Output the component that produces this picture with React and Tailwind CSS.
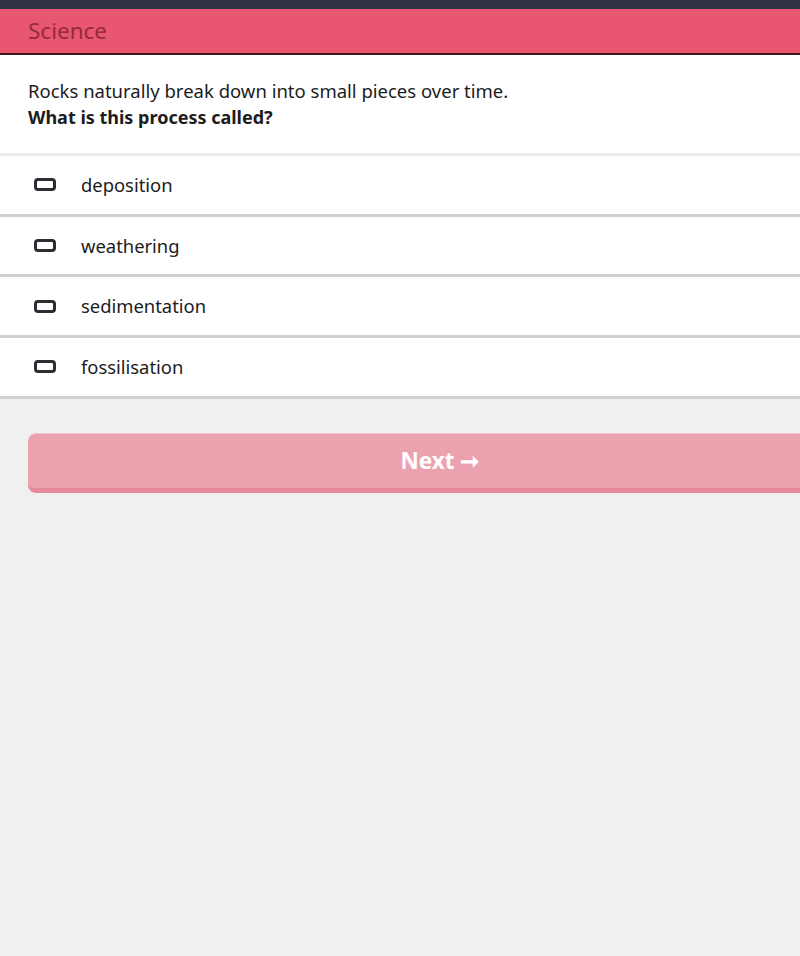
import React from "react";

const options = ["deposition", "weathering", "sedimentation", "fossilisation"];

function Box() {
  return (
    <div className="w-[22px] h-[13px] rounded-[4px] border-[3px] border-[#2b2d33] box-border" />
  );
}

export default function App() {
  return (
    <div
      className="w-[800px] h-[956px] bg-[#f0f0f0] overflow-hidden flex flex-col"
      style={{ fontFamily: '"Noto Sans", "Open Sans", sans-serif' }}
    >
      <div className="h-[9px] bg-[#2f3242] shrink-0" />
      <div className="h-[46px] bg-[#e8566f] border-b-[2px] border-[#3a1a20] flex items-center px-[28px] shrink-0">
        <span className="text-[22.5px] text-[#962a40] leading-none">Science</span>
      </div>
      <div className="bg-white px-[28px] pt-[23px] h-[101px] border-b-[3px] border-[#ececec] shrink-0 text-[#1c1c1c]">
        <p className="text-[18.5px] leading-[26px]">Rocks naturally break down into small pieces over time.</p>
        <p className="text-[18px] leading-[26px] font-bold">What is this process called?</p>
      </div>
      {options.map((o) => (
        <div
          key={o}
          className="bg-white h-[60.67px] border-b-[3px] border-[#d0d0d0] flex items-center shrink-0 box-border"
        >
          <div className="w-[81px] flex justify-start pl-[34px]">
            <Box />
          </div>
          <span className="text-[18.4px] text-[#1c1c1c]">{o}</span>
        </div>
      ))}
      <div className="pl-[28px] pt-[34px]">
        <div className="w-[824px] h-[60px] bg-[#eca2ae] rounded-[8px] border-b-[5px] border-[#e8899a] border-t border-t-[#f3c3cb] flex items-center justify-center box-border">
          <span className="text-white font-bold text-[22.5px]">Next ➞</span>
        </div>
      </div>
    </div>
  );
}
